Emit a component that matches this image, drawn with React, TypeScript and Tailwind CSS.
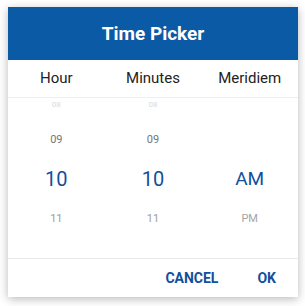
import React from "react";

export default function App() {
  const font = { fontFamily: "Roboto, 'Noto Sans', sans-serif" };
  return (
    <div className="w-[305px] h-[306px] bg-white pt-[7px] pl-[8px]" style={font}>
      <div className="w-[290px] h-[290px] bg-white flex flex-col shadow-[0_2px_9px_rgba(0,0,0,0.28)]">
        <div className="h-[53px] bg-[#0b5aa5] flex items-center justify-center">
          <span className="text-white text-[19px] font-bold leading-none">Time Picker</span>
        </div>
        <div className="h-[38px] grid grid-cols-3 border-b border-[#efefef] items-center">
          <div className="text-center text-[15px] text-[#222] leading-none">Hour</div>
          <div className="text-center text-[15px] text-[#222] leading-none">Minutes</div>
          <div className="text-center text-[15px] text-[#222] leading-none">Meridiem</div>
        </div>
        <div className="h-[160px] grid grid-cols-3">
          {[0, 1].map((i) => (
            <div key={i} className="flex flex-col">
              <div className="h-[14px] flex items-center justify-center text-[8px] text-[#dadada]">08</div>
              <div className="h-[57px] flex items-center justify-center text-[11px] text-[#757575]">09</div>
              <div className="h-[20px] flex items-center justify-center text-[20px] text-[#124f9c]">10</div>
              <div className="h-[61px] flex items-center justify-center text-[11px] text-[#9e9e9e]">11</div>
            </div>
          ))}
          <div className="flex flex-col">
            <div className="h-[14px]" />
            <div className="h-[57px]" />
            <div className="h-[20px] flex items-center justify-center text-[19px] text-[#124f9c]">AM</div>
            <div className="h-[61px] flex items-center justify-center text-[11px] text-[#a3a3a3]">PM</div>
          </div>
        </div>
        <div className="h-[39px] border-t border-[#e8e8e8] flex items-center justify-end pr-[22px] gap-[39px]">
          <span className="text-[14px] font-bold text-[#124f9c] leading-none">CANCEL</span>
          <span className="text-[14px] font-bold text-[#124f9c] leading-none">OK</span>
        </div>
      </div>
    </div>
  );
}
